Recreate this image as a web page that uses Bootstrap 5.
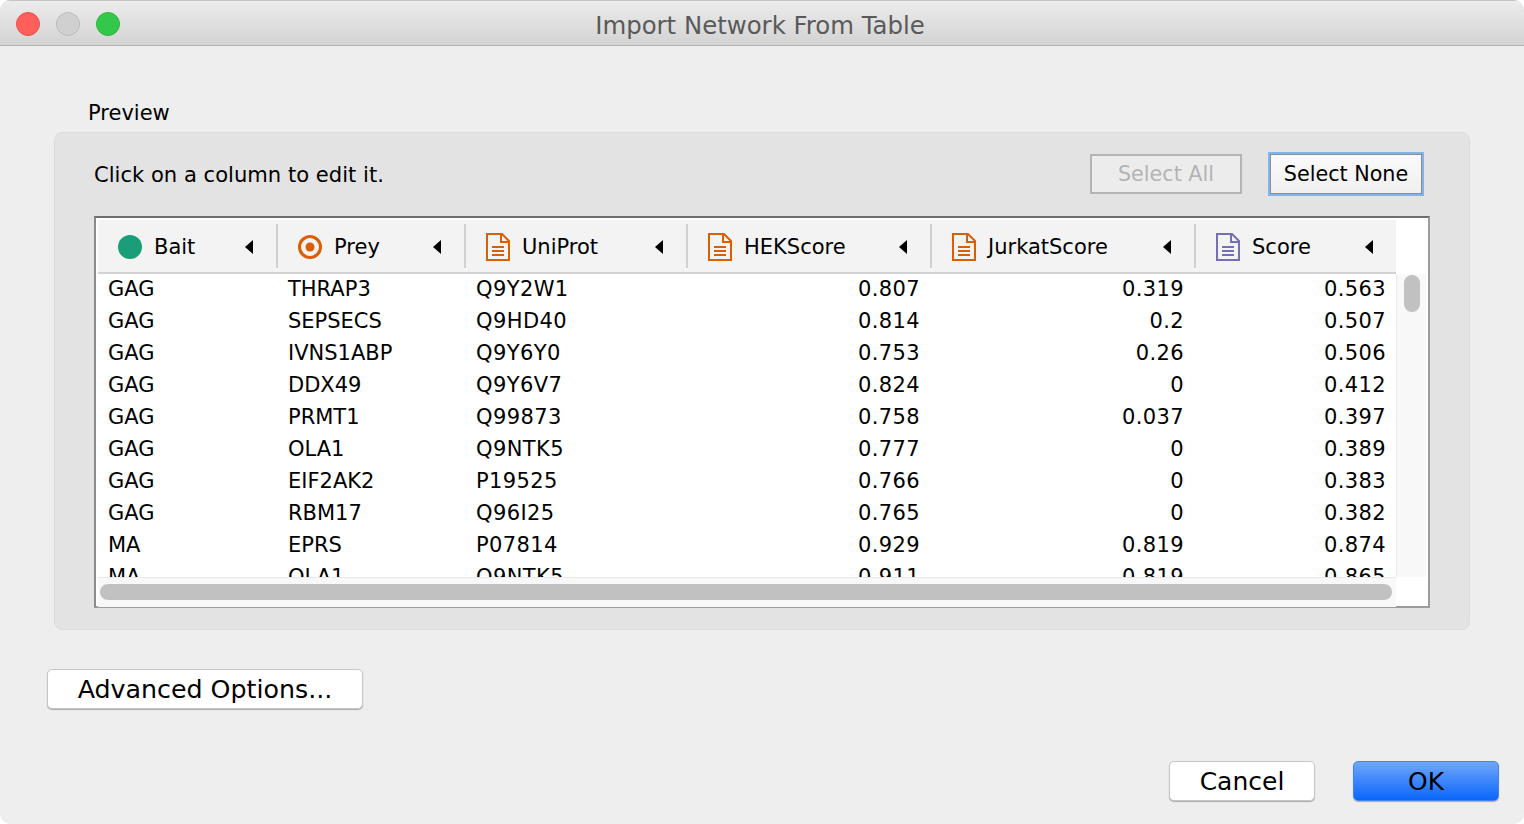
<!DOCTYPE html>
<html lang="en">
<head>
  <meta charset="UTF-8">
  <title>Import Network From Table</title>
  <link href="https://cdn.jsdelivr.net/npm/bootstrap@5.3.0/dist/css/bootstrap.min.css" rel="stylesheet">
  <style>
    html, body { height: 100%; background: #fff; overflow: hidden; }
    body { font-family: "DejaVu Sans", "Noto Sans", sans-serif; color: #000; }
    .app-window {
      width: 1524px; height: 824px; background: #eeeeee;
      border-radius: 10px; overflow: hidden;
    }
    .title-bar {
      height: 46px; position: relative;
      background: linear-gradient(#ececec, #d3d3d3);
      border-bottom: 1px solid #b2b2b2;
      border-top: 1px solid #c4c4c4;
    }
    .light { width: 24px; height: 24px; border-radius: 50%; border: 1px solid; }
    .light-red { background: #ff5f5b; border-color: #e9504c; }
    .light-gray { background: #d0d0d0; border-color: #bcbcbc; }
    .light-green { background: #34c84a; border-color: #2eb541; }
    .lights { padding: 11px 0 0 16px; gap: 16px; }
    .win-title {
      position: absolute; left: 0; right: 0; top: 8px; padding-right: 4px;
      text-align: center; font-size: 24.4px; line-height: 34px; color: #5a5a5a;
    }
    .section-label { padding: 53px 0 0 88px; height: 86px; font-size: 21px; line-height: 28px; }
    .preview-panel {
      margin-left: 54px; width: 1416px; height: 498px;
      background: #e3e3e3; border: 1px solid #dcdcdc; border-radius: 8px;
      padding: 21px 39px 0;
    }
    .panel-top { height: 62px; padding-right: 8px; }
    .hint { font-size: 21.1px; line-height: 42px; }
    .mac-btn {
      font-size: 20.7px; line-height: 1; color: #000; padding: 1px 0 0;
      background: #fff; border: 1px solid #c6c6c6; border-radius: 5px;
      box-shadow: 0 1px 1px #a9a9a9;
    }
    .btn-square {
      width: 152px; height: 40px; border-radius: 0;
      background: linear-gradient(#fafafa, #f0f0f0); box-shadow: none; border: 2px solid #cfcfcf;
    }
    .btn-square[disabled] { color: #b4b4b4; background: #ececec; opacity: 1; }
    .btn-focus { margin-left: 28px; border: 1px solid #8d8d8d; outline: 2px solid #80b4ee; }
    .table-box {
      width: 1336px; height: 392px; background: #fff;
      border: 2px solid #9c9c9c; border-top-color: #6e6e6e; border-left-color: #8a8a8a;
      padding: 2px 2px 0;
    }
    .table-area { width: 1298px; }
    .head-row { height: 54px; background: #f3f3f3; border-bottom: 2px solid #d2d2d2; }
    .head-cell { height: 44px; font-size: 21px; border-right: 2px solid #d0d0d0; flex: none; padding-right: 23px; margin-top: 4px; }
    .head-cell:last-child { border-right: 0; }
    .head-cell svg { flex: none; margin-top: 2px; }
    .head-name { margin-left: 12px; flex: 1; padding-top: 3px; }
    .sort-arrow { width: 0; height: 0; margin-top: 1px; border-style: solid; border-width: 7px 8px 7px 0; border-color: transparent #000 transparent transparent; }
    .rows-clip { height: 303px; overflow: hidden; }
    .data-table { table-layout: fixed; width: 1298px; border-collapse: collapse; font-size: 21px; margin: -1px 0 0; }
    .data-table td { height: 32px; padding: 0 12px 0 10px; line-height: 32px; white-space: nowrap; }
    .data-table td.num-cell { letter-spacing: 0.4px; }
    .data-table td:last-child { padding-right: 10px; }
    .hbar { height: 30px; width: 1298px; background: #f8f8f8; border-top: 1px solid #e8e8e8; padding: 6px 4px 0 2px; }
    .hbar-thumb { height: 16px; background: #c1c1c1; border-radius: 8px; }
    .vbar { width: 30px; height: 303px; margin-top: 54px; background: #fff; }
    .vbar-track { width: 30px; height: 303px; background: #f8f8f8; padding: 1px 7px 0; border-left: 1px solid #e8e8e8; }
    .vbar-thumb { height: 37px; width: 16px; background: #c1c1c1; border-radius: 8px; }
    .advanced-row { padding: 39px 0 0 47px; height: 131px; }
    .btn-advanced { width: 316px; height: 40px; font-size: 25.3px; }
    .footer-row { padding-right: 25px; gap: 38px; }
    .btn-footer { width: 146px; height: 40px; font-size: 25px; padding-top: 0; }
    .btn-ok {
      background: linear-gradient(#70a6fb, #0a66fb); border: 1px solid #3f84f5;
    }
  </style>
</head>
<body>
  <div class="app-window d-flex flex-column">

    <!-- Title bar -->
    <div class="title-bar">
      <div class="lights d-flex">
        <div class="light light-red"></div>
        <div class="light light-gray"></div>
        <div class="light light-green"></div>
      </div>
      <div class="win-title">Import Network From Table</div>
    </div>

    <div class="section-label">Preview</div>

    <div class="preview-panel">
      <div class="panel-top d-flex justify-content-between">
        <div class="hint">Click on a column to edit it.</div>
        <div class="d-flex align-items-start">
          <button class="btn mac-btn btn-square" disabled>Select All</button>
          <button class="btn mac-btn btn-square btn-focus">Select None</button>
        </div>
      </div>

      <div class="table-box d-flex">
        <div class="table-area">
          <div class="head-row d-flex" id="headRow"></div>
          <div class="rows-clip">
            <table class="data-table">
              <colgroup id="cols"></colgroup>
              <tbody id="rows"></tbody>
            </table>
          </div>
          <div class="hbar"><div class="hbar-thumb"></div></div>
        </div>
        <div class="vbar">
          <div class="vbar-track"><div class="vbar-thumb"></div></div>
        </div>
      </div>
    </div>

    <div class="advanced-row">
      <button class="btn mac-btn btn-advanced">Advanced Options...</button>
    </div>

    <div class="footer-row d-flex justify-content-end">
      <button class="btn mac-btn btn-footer">Cancel</button>
      <button class="btn mac-btn btn-footer btn-ok">OK</button>
    </div>
  </div>

  <script>
    const docIcon = (color) => `<svg width="24" height="28" viewBox="0 0 24 28" fill="none" stroke="${color}" stroke-width="2"><path d="M1 1h15l7 7v19H1z"/><path d="M15 1v8h8"/><path d="M6 14h12M6 18h12M6 22h12"/></svg>`;
    const columns = [
      { name: 'Bait', width: 180, pad: 20, icon: '<svg width="24" height="24" viewBox="0 0 24 24"><circle cx="12" cy="12" r="12" fill="#1b9e77"/></svg>' },
      { name: 'Prey', width: 188, pad: 20, icon: '<svg width="24" height="24" viewBox="0 0 24 24"><circle cx="12" cy="12" r="10.5" fill="none" stroke="#d95f02" stroke-width="3"/><circle cx="12" cy="12" r="4.5" fill="#d95f02"/></svg>' },
      { name: 'UniProt', width: 222, pad: 20, icon: docIcon('#d95f02') },
      { name: 'HEKScore', width: 244, pad: 20, icon: docIcon('#d95f02') },
      { name: 'JurkatScore', width: 264, pad: 20, icon: docIcon('#d95f02') },
      { name: 'Score', width: 200, pad: 20, icon: docIcon('#7570b3') }
    ];
    const data = [
      ['GAG','THRAP3','Q9Y2W1','0.807','0.319','0.563'],
      ['GAG','SEPSECS','Q9HD40','0.814','0.2','0.507'],
      ['GAG','IVNS1ABP','Q9Y6Y0','0.753','0.26','0.506'],
      ['GAG','DDX49','Q9Y6V7','0.824','0','0.412'],
      ['GAG','PRMT1','Q99873','0.758','0.037','0.397'],
      ['GAG','OLA1','Q9NTK5','0.777','0','0.389'],
      ['GAG','EIF2AK2','P19525','0.766','0','0.383'],
      ['GAG','RBM17','Q96I25','0.765','0','0.382'],
      ['MA','EPRS','P07814','0.929','0.819','0.874'],
      ['MA','OLA1','Q9NTK5','0.911','0.819','0.865']
    ];

    document.getElementById('headRow').innerHTML = columns.map(c => `
      <div class="head-cell d-flex align-items-center" style="width:${c.width}px;padding-left:${c.pad}px">
        ${c.icon}<span class="head-name">${c.name}</span><span class="sort-arrow"></span>
      </div>`).join('');

    document.getElementById('cols').innerHTML = columns.map(c => `<col style="width:${c.width}px">`).join('');

    document.getElementById('rows').innerHTML = data.map(row => '<tr>' + row.map((v, i) =>
      `<td class="${i > 1 ? 'num-cell' : ''} ${i > 2 ? 'text-end' : ''}">${v}</td>`).join('') + '</tr>').join('');
  </script>
  <script src="https://cdn.jsdelivr.net/npm/bootstrap@5.3.0/dist/js/bootstrap.bundle.min.js"></script>
</body>
</html>
